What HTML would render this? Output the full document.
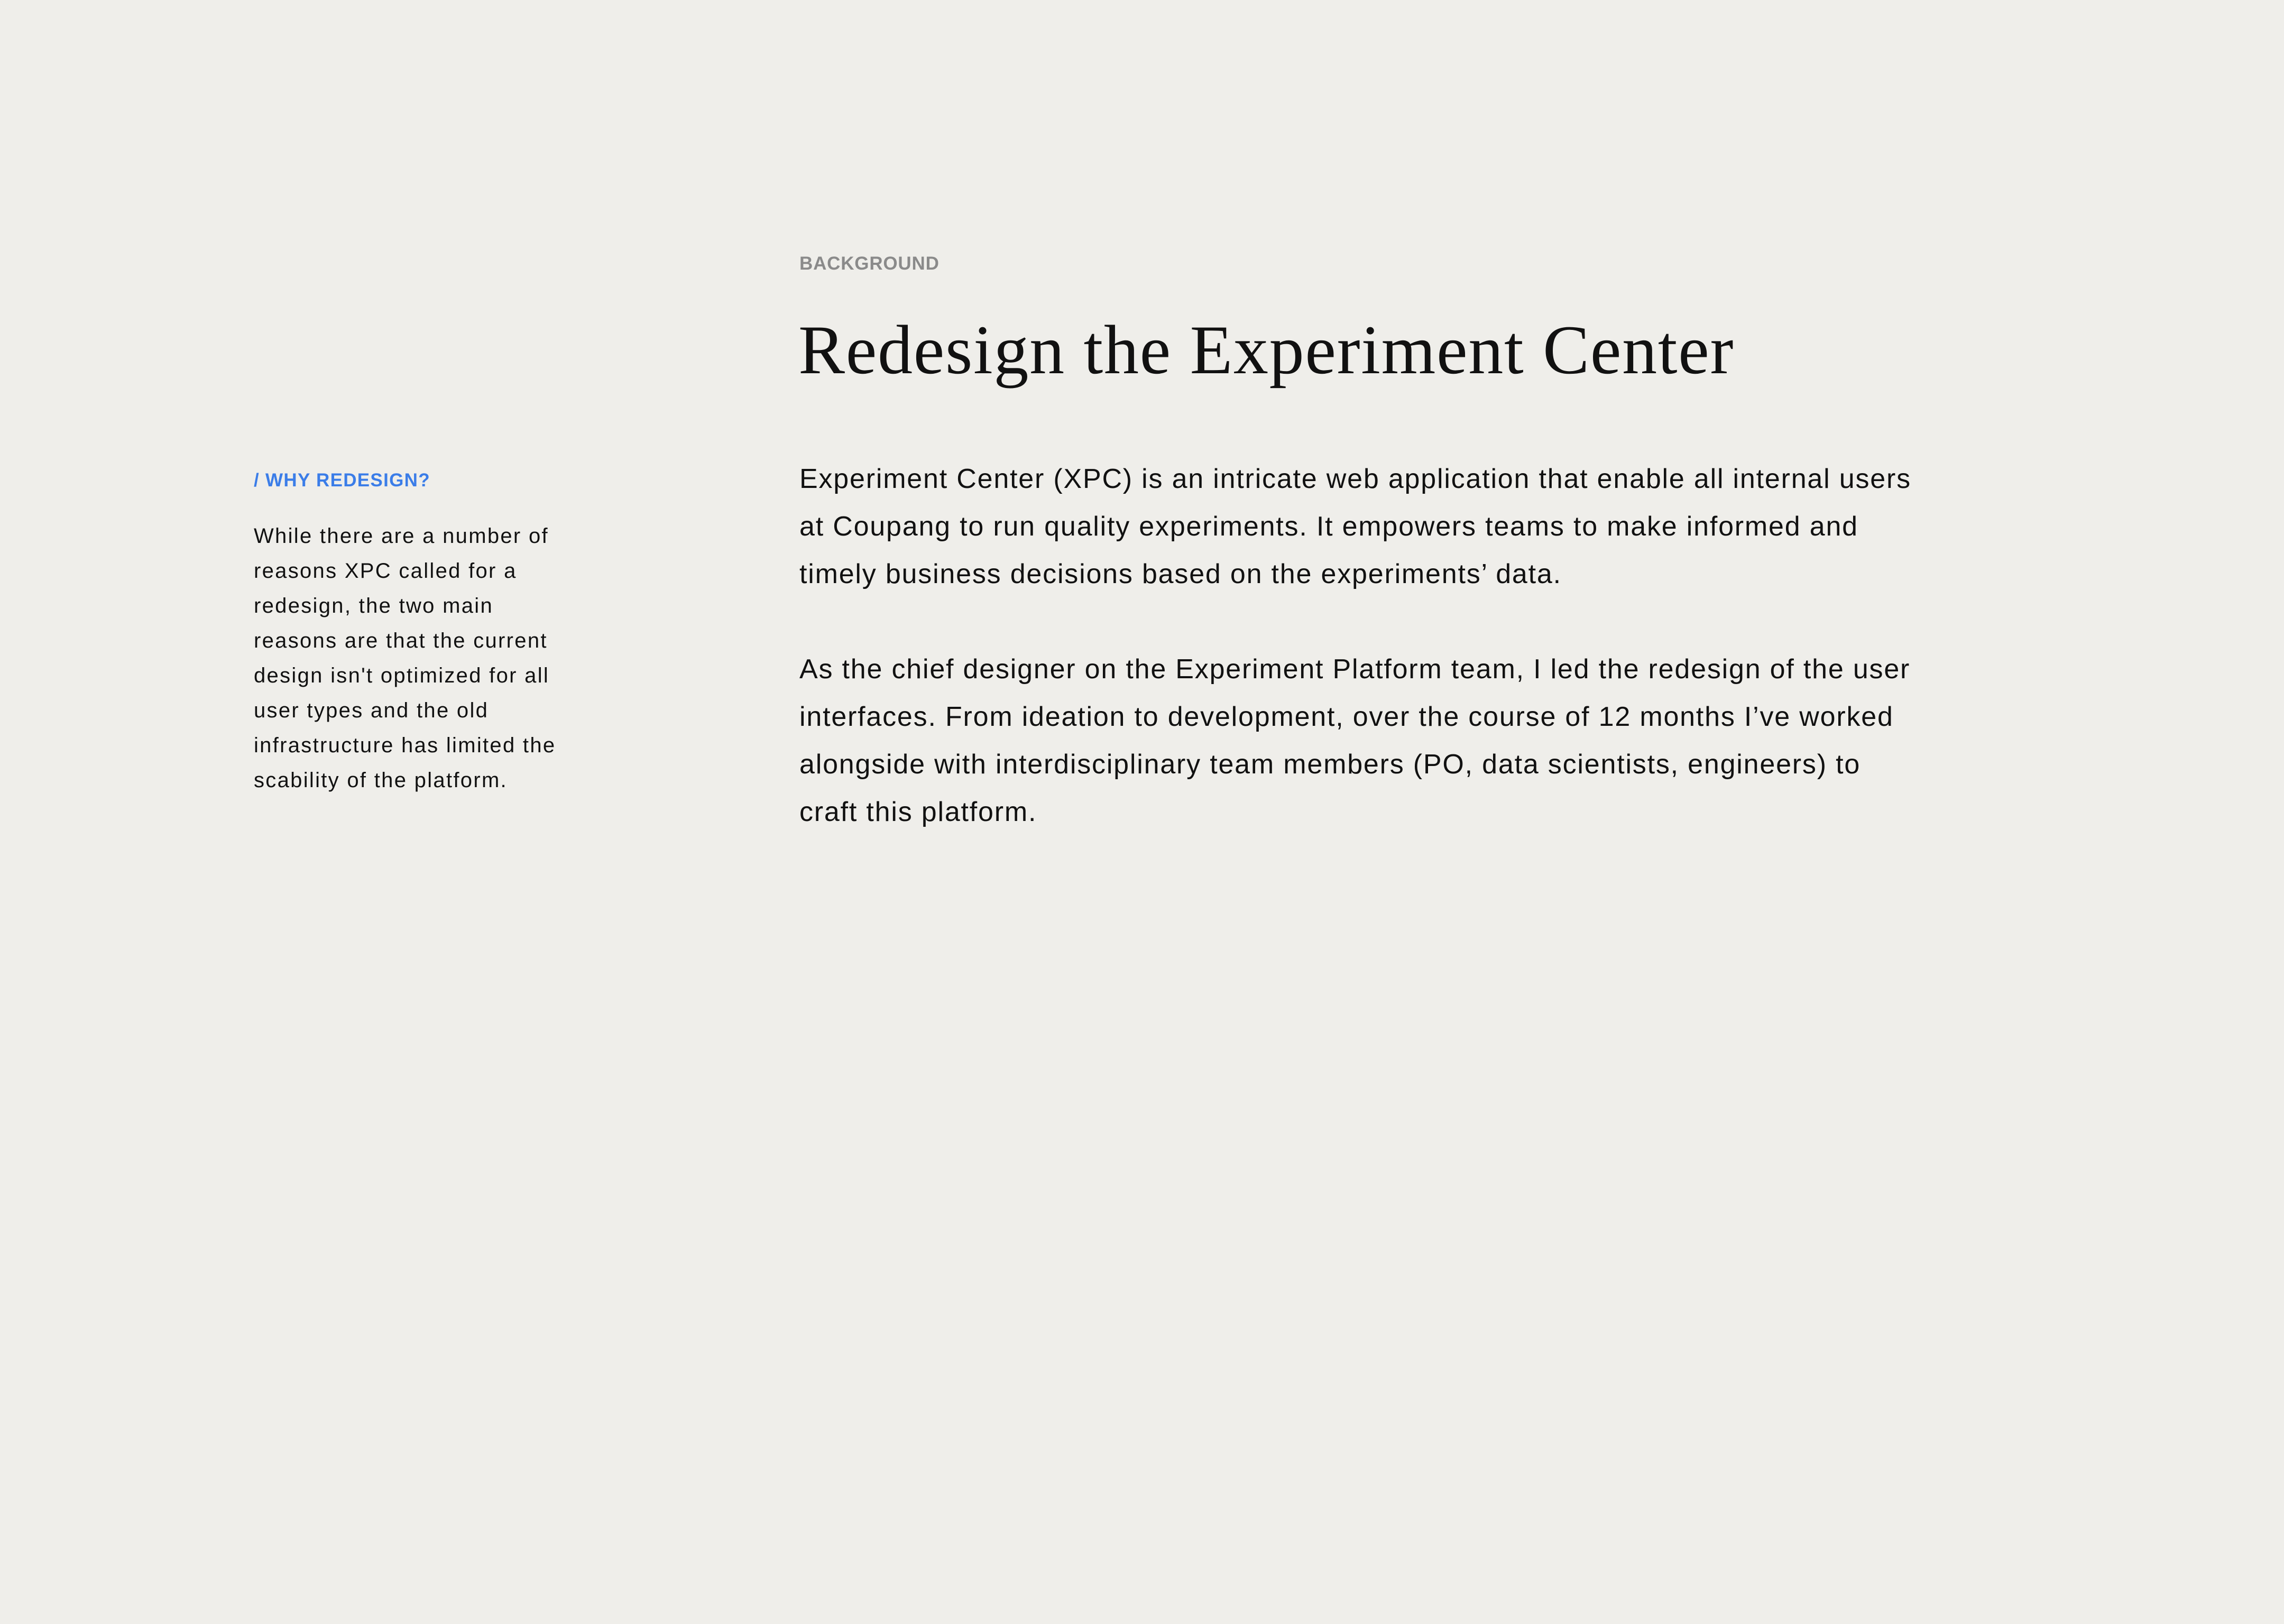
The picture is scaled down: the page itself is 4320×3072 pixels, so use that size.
<!DOCTYPE html>
<html><head><meta charset="utf-8"><style>
html,body{margin:0;padding:0}
body{width:4320px;height:3072px;background:#efeeea;position:relative;overflow:hidden;font-family:"Liberation Sans",sans-serif;color:#111}
.a{position:absolute;white-space:nowrap}
#bg{left:1512px;top:479px;font-size:35px;line-height:40px;color:#8a8a8a;font-weight:bold;letter-spacing:0.8px}
#t{left:1510px;top:582px;font-family:"Liberation Serif",serif;font-size:132px;line-height:160px;color:#111;letter-spacing:1.7px}
#why{left:480px;top:889px;font-size:35px;line-height:40px;color:#3b7de8;font-weight:bold;letter-spacing:1.3px}
#lp{left:480px;top:981px;font-size:40px;line-height:66px;letter-spacing:2.3px}
#body{left:1512px;top:861px;font-size:52px;line-height:90px;letter-spacing:1.8px}
#body p{margin:0 0 90px}
</style></head><body>
<div class="a" id="bg">BACKGROUND</div>
<div class="a" id="t">Redesign the Experiment Center</div>
<div class="a" id="why">/ WHY REDESIGN?</div>
<div class="a" id="lp">While there are a number of<br>reasons XPC called for a<br>redesign, the two main<br>reasons are that the current<br>design isn't optimized for all<br>user types and the old<br>infrastructure has limited the<br>scability of the platform.</div>
<div class="a" id="body"><p>Experiment Center (XPC) is an intricate web application that enable all internal users<br>at Coupang to run quality experiments. It empowers teams to make informed and<br>timely business decisions based on the experiments’ data.</p><p>As the chief designer on the Experiment Platform team, I led the redesign of the user<br>interfaces. From ideation to development, over the course of 12 months I’ve worked<br>alongside with interdisciplinary team members (PO, data scientists, engineers) to<br>craft this platform.</p></div>
</body></html>
